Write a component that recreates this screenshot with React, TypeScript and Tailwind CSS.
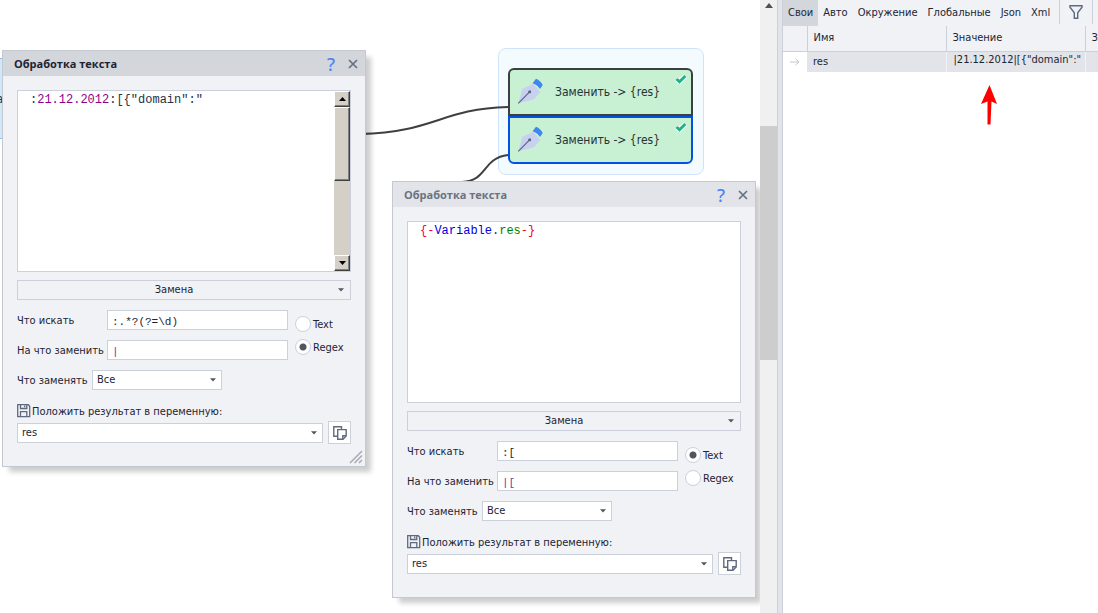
import { useId } from "react";
import type { ReactNode } from "react";

type Token = { text: string; className: string };

type WindowProps = {
  active?: boolean;
  tokens: Token[];
  scrollable?: boolean;
  find: string;
  replacement: string;
  mode: "text" | "regex";
};

function Caret() {
  return (
    <svg viewBox="0 0 6 4" className="h-1 w-1.5 shrink-0" aria-hidden="true">
      <path d="M0 .3h6L3 3.5z" fill="#50565f" />
    </svg>
  );
}

function CloseIcon() {
  return (
    <svg viewBox="0 0 10 10" className="size-2.5" aria-hidden="true">
      <path d="M1 1l8 8M9 1L1 9" stroke="#667082" strokeWidth="1.7" fill="none" />
    </svg>
  );
}

function SaveIcon() {
  return (
    <svg viewBox="0 0 14 14" className="size-3.5 shrink-0" fill="none" stroke="#5f6a80" aria-hidden="true">
      <path d="M.7.7h10.600L12.700 2.200V12.700H.7z" strokeWidth="1.3" />
      <path d="M3.500 1v3.500h6.300V1M7.700 1.500v1.700" strokeWidth="1.3" />
      <path d="M3.500 12.500V7.700h6.300v4.800" strokeWidth="1.3" />
    </svg>
  );
}

function CopyIcon() {
  return (
    <svg viewBox="0 0 14 14" className="size-3.5" fill="none" stroke="#5f6a80" strokeWidth="1.4" aria-hidden="true">
      <path d="M4.500 10.300H.8V.8h7.700v2.600" />
      <path d="M4.700 3.600h8.500v6.300l-3.200 3.300H4.700z" fill="#fff" />
      <path d="M13 9.700H9.800v3.300" />
    </svg>
  );
}

function Picker({ id, value, className }: { id: string; value: string; className: string }) {
  return (
    <span className={`relative flex h-5 ${className}`}>
      <select
        id={id}
        className="h-full w-full appearance-none border border-[#cbd0db] bg-white pl-1 text-[11px] leading-4 text-[#1c2433] outline-none"
      >
        <option>{value}</option>
      </select>
      <span className="pointer-events-none absolute inset-y-0 right-1.5 flex items-center">
        <Caret />
      </span>
    </span>
  );
}

function ScrollButton({ up }: { up?: boolean }) {
  return (
    <button
      type="button"
      aria-label={up ? "Вверх" : "Вниз"}
      className="flex h-4 w-full shrink-0 items-center justify-center border border-t-white border-r-[#404040] border-b-[#404040] border-l-white bg-[#d4d0c8] shadow-[inset_-1px_-1px_0_#808080]"
    >
      <svg viewBox="0 0 7 4" className="h-1 w-[7px]" aria-hidden="true">
        <path d={up ? "M3.5 0L7 4H0z" : "M0 0h7L3.5 4z"} fill="#000" />
      </svg>
    </button>
  );
}

function Editor({ tokens, scrollable }: { tokens: Token[]; scrollable?: boolean }) {
  return (
    <div className="flex h-[182px] border border-[#cbd0db] bg-white">
      <div
        role="textbox"
        aria-multiline="true"
        aria-label="Текст"
        contentEditable
        suppressContentEditableWarning
        className="min-w-0 flex-1 pt-px pl-3 font-['Liberation_Mono',monospace] text-[12px] leading-4 whitespace-pre outline-none"
      >
        {tokens.map((t) => (
          <span key={t.text} className={t.className}>
            {t.text}
          </span>
        ))}
      </div>
      {scrollable && (
        <div className="flex w-4 flex-col bg-[#d4d0c8]">
          <ScrollButton up />
          <div className="h-[74px] border border-t-white border-r-[#404040] border-b-[#404040] border-l-white bg-[#d4d0c8] shadow-[inset_-1px_-1px_0_#808080]" />
          <div className="flex-1" />
          <ScrollButton />
        </div>
      )}
    </div>
  );
}

function Field({ label, value, className }: { label: string; value: string; className: string }) {
  const id = useId();
  return (
    <div className="flex h-5 items-center">
      <label htmlFor={id} className="w-[90px] shrink-0 pt-0.5 whitespace-nowrap">
        {label}
      </label>
      <input
        id={id}
        type="text"
        defaultValue={value}
        className={`h-5 min-w-0 flex-1 border border-[#cbd0db] bg-white pt-1 pl-1 font-['Liberation_Mono',monospace] text-[11px] leading-4 outline-none ${className}`}
      />
    </div>
  );
}

function Radio({ name, label, checked }: { name: string; label: string; checked: boolean }) {
  return (
    <label className="flex h-4 items-center gap-0.5">
      <input
        type="radio"
        name={name}
        defaultChecked={checked}
        className="size-4 shrink-0 appearance-none rounded-full border border-[#cbd0db] bg-white checked:bg-[radial-gradient(circle,#50565f_0_3px,#fff_4px)]"
      />
      <span className="pt-0.5">{label}</span>
    </label>
  );
}

function TextWindow({ active, tokens, scrollable, find, replacement, mode }: WindowProps) {
  const id = useId();
  return (
    <section className="w-[364px] border border-[#c3c8d2] bg-[#f1f2f6] text-[11px] leading-4 text-[#1c2433] shadow-[6px_6px_5px_-1px_rgba(0,0,0,0.2)]">
      <header
        className={`flex h-[25px] items-center pr-1 pl-[11px] ${active ? "bg-[#d3d6db] text-[#1c2433]" : "bg-[#e2e4e9] text-[#6a7280]"}`}
      >
        <h2 className="flex-1 font-['Open_Sans',sans-serif] text-[11px] font-bold">Обработка текста</h2>
        <button type="button" aria-label="Справка" className="w-4 font-['Noto_Sans',sans-serif] text-lg leading-4 font-medium text-[#4f83f5]">
          ?
        </button>
        <button type="button" aria-label="Закрыть" className="ml-1.5 flex size-4 items-center justify-center">
          <CloseIcon />
        </button>
      </header>
      <div className="relative px-3.5 pt-3.5 pb-[22px]">
        <Editor tokens={tokens} scrollable={scrollable} />
        <button type="button" className="mt-2 flex h-5 w-full items-center border border-[#cbd0db] pr-1.5">
          <span className="flex-1 pr-2 text-center">Замена</span>
          <Caret />
        </button>
        <div className="mt-2.5 flex gap-[7px]">
          <div className="flex min-w-0 flex-1 flex-col gap-2.5">
            <Field label="Что искать" value={find} className="text-[#1c2433]" />
            <Field label="На что заменить" value={replacement} className="text-[#6b3fa0]" />
          </div>
          <div role="radiogroup" className="flex w-14 flex-col gap-[7px] pt-1.5">
            <Radio name={id} label="Text" checked={mode === "text"} />
            <Radio name={id} label="Regex" checked={mode === "regex"} />
          </div>
        </div>
        <div className="mt-2.5 flex items-center">
          <label htmlFor={`${id}scope`} className="w-[75px] pt-0.5 whitespace-nowrap">
            Что заменять
          </label>
          <Picker id={`${id}scope`} value="Все" className="w-[130px]" />
        </div>
        <div className="mt-3 flex items-center gap-px">
          <SaveIcon />
          <label htmlFor={`${id}var`} className="pt-0.5">
            Положить результат в переменную:
          </label>
        </div>
        <div className="mt-px flex items-center gap-[5px]">
          <Picker id={`${id}var`} value="res" className="min-w-0 flex-1" />
          <button
            type="button"
            aria-label="Копировать"
            className="flex size-[23px] items-center justify-center border border-[#cbd0db] bg-white"
          >
            <CopyIcon />
          </button>
        </div>
        {active && (
          <svg viewBox="0 0 14 14" className="absolute right-0.5 bottom-0.5 size-3.5" stroke="#a9adb5" strokeWidth="1.6" aria-hidden="true">
            <path d="M1 13L13 1M5.5 13L13 5.5M10 13l3-3" />
          </svg>
        )}
      </div>
    </section>
  );
}

function PenIcon() {
  return (
    <svg viewBox="0 0 32 32" className="size-8 shrink-0" aria-hidden="true">
      <path d="M3.3 27.3L7.2 13 18.300 7.800l6.900 8.200-6.500 7.500z" fill="#c9d0ef" />
      <path d="M3.3 27.3l11-11.1" stroke="#59607c" strokeWidth="1.1" />
      <circle cx="14.700" cy="15.800" r="1.500" fill="#59607c" />
      <path d="M17.600 7.200L21 2.700c2.800 1 5.500 3.300 6.700 6.200L25 13c-1.600-2.700-4.200-4.800-7.400-5.800z" fill="#3f87ec" />
    </svg>
  );
}

function ActionCard({ className }: { className: string }) {
  return (
    <div className={`relative flex h-12 items-center border-2 bg-[#c8f0d3] pl-[5px] ${className}`}>
      <PenIcon />
      <span className="ml-2 text-[12px] text-[#263238]">{"Заменить -> {res}"}</span>
      <svg viewBox="0 0 12 10" className="absolute top-1 right-1 h-2.5 w-3" aria-hidden="true">
        <path d="M1.500 5l3 2.700L10.300 2" fill="none" stroke="#fff" strokeWidth="5" />
        <path d="M1.500 5l3 2.700L10.300 2" fill="none" stroke="#23b08a" strokeWidth="3" />
      </svg>
    </div>
  );
}

function Canvas() {
  return (
    <main className="relative min-w-0 flex-1 overflow-hidden bg-white">
      <div className="absolute top-[58px] -left-20 flex h-[81px] w-[84px] items-center justify-end border border-[#8dbdf0] bg-[#d3e8f6] text-[12px] text-[#263238]">
        а
      </div>
      <div className="absolute top-12 left-[498px] w-[206px] rounded-lg border border-[#cfe4fa] bg-[#f3fbff] pt-[19px] pr-2.5 pb-2.5 pl-[9px]">
        <ActionCard className="rounded-t-md border-[#3b3f40]" />
        <ActionCard className="rounded-b-md border-[#0052e0]" />
      </div>
      <svg className="absolute top-0 left-0 h-[200px] w-[520px]" fill="none" stroke="#3f3f3f" strokeWidth="2" aria-hidden="true">
        <path d="M360 134C436 132 440 109 508 107" />
        <path d="M462 182C488 181 482 158 508 155" />
      </svg>
      <div className="absolute top-[50px] left-0.5">
        <TextWindow
          active
          scrollable
          tokens={[
            { text: ":", className: "text-[#26303f]" },
            { text: "21.12.2012", className: "text-[#8b008b]" },
            { text: ':[{"domain":"', className: "text-[#26303f]" },
          ]}
          find=":.*?(?=\d)"
          replacement="|"
          mode="regex"
        />
      </div>
      <div className="absolute top-[181px] left-[392px]">
        <TextWindow
          tokens={[
            { text: "{-", className: "text-[#f5002f]" },
            { text: "Variable", className: "text-[#0000e0]" },
            { text: ".", className: "text-[#26303f]" },
            { text: "res", className: "text-[#008000]" },
            { text: "-}", className: "text-[#f5002f]" },
          ]}
          find=":["
          replacement="|["
          mode="text"
        />
      </div>
    </main>
  );
}

function Tab({ children, selected }: { children: ReactNode; selected?: boolean }) {
  return (
    <button type="button" role="tab" aria-selected={!!selected} className={`h-full px-[5px] ${selected ? "bg-[#d3d6db]" : ""}`}>
      {children}
    </button>
  );
}

function VariablesPanel() {
  return (
    <aside className="w-[315px] shrink-0 overflow-hidden bg-white text-[11px] leading-4 text-[#1c2433]">
      <div className="flex h-[26px] bg-[#f1f2f6]">
        <div role="tablist" className="flex">
          <Tab selected>Свои</Tab>
          <Tab>Авто</Tab>
          <Tab>Окружение</Tab>
          <Tab>Глобальные</Tab>
          <Tab>Json</Tab>
          <Tab>Xml</Tab>
        </div>
        <button type="button" aria-label="Фильтр" className="ml-auto flex h-6 w-[34px] items-center justify-center border-x border-[#cbd0db]">
          <svg viewBox="0 0 14 16" className="h-4 w-3.5" fill="none" stroke="#5f6a80" strokeWidth="1.400" aria-hidden="true">
            <path d="M1 1.700h12v1.600L8.700 8.700v5.600H5.300V8.700L1 3.300z" />
          </svg>
        </button>
        <div className="w-[5px]" />
      </div>
      <table className="w-full table-fixed border-collapse text-left">
        <colgroup>
          <col className="w-6" />
          <col className="w-[139px]" />
          <col className="w-[139px]" />
          <col />
        </colgroup>
        <thead>
          <tr className="h-[25px] border-b border-[#cbd0db] bg-[#f1f2f6]">
            <th className="border-r border-[#cbd0db] p-0" />
            <th className="border-r border-[#cbd0db] p-0 pl-1.5 font-normal">Имя</th>
            <th className="border-r border-[#cbd0db] p-0 pl-1.5 font-normal">Значение</th>
            <th className="overflow-hidden p-0 pl-1.5 font-normal">З</th>
          </tr>
        </thead>
        <tbody>
          <tr className="h-[21px]">
            <td className="p-0">
              <svg viewBox="0 0 10 8" className="mx-auto h-2 w-2.5" fill="none" stroke="#c4c6ca" aria-hidden="true">
                <path d="M0 4h9M5.500 .8L9 4 5.500 7.200" />
              </svg>
            </td>
            <td className="border-r border-[#f1f2f6] bg-[#e2e4e9] p-0 pl-1.5">res</td>
            <td className="border-r border-[#f1f2f6] bg-[#e2e4e9] p-0 pb-1 pl-[7px] text-[11px] whitespace-nowrap">{'|21.12.2012|[{"domain":"'}</td>
            <td className="bg-[#e2e4e9] p-0" />
          </tr>
        </tbody>
      </table>
      <svg viewBox="0 0 16 40" className="mt-[13px] ml-[198px] h-10 w-4" aria-hidden="true">
        <path d="M8.500 0L16 19l-5.500-2.500L9.500 39.500H6.500V16.500L0 19z" fill="#f00" />
      </svg>
    </aside>
  );
}

export default function App() {
  return (
    <div className="flex h-screen overflow-hidden bg-white font-['DejaVu_Sans_Condensed','DejaVu_Sans',sans-serif]">
      <Canvas />
      <div className="flex w-[17px] shrink-0 flex-col items-center bg-[#f0f0f0]">
        <svg viewBox="0 0 8 5" className="mt-[3px] h-[5px] w-2" aria-hidden="true">
          <path d="M4 0l4 5H0z" fill="#505050" />
        </svg>
        <div className="mt-[118px] h-[234px] w-full bg-[#cdcdcd]" />
      </div>
      <div className="w-1.5 shrink-0 border-x border-[#cbd0db] bg-[#e3e4e9]" />
      <VariablesPanel />
    </div>
  );
}
